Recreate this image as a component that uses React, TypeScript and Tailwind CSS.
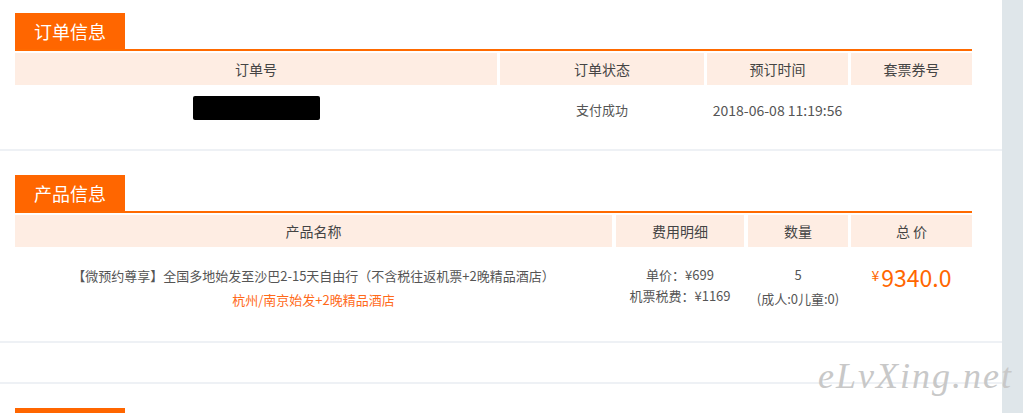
import React from "react";

const font = { fontFamily: '"Noto Sans CJK SC", "Noto Sans", sans-serif' };

function Tab({ label }: { label: string }) {
  return (
    <div className="flex">
      <div className="w-[110px] h-[36px] bg-[#ff6600] text-white text-[18px] flex items-center justify-center leading-none">
        {label}
      </div>
    </div>
  );
}

function Head({ w, ml, children }: { w: string; ml?: string; children: React.ReactNode }) {
  return (
    <div className={`${w} ${ml ?? ""} h-[32px] bg-[#feede3] flex items-center justify-center text-[14px] text-[#444]`}>
      {children}
    </div>
  );
}

export default function App() {
  return (
    <div className="relative flex w-[1023px] h-[413px] overflow-hidden bg-white" style={font}>
      <div className="w-[1002px] shrink-0">
        {/* Section 1 */}
        <div className="pt-[13px] pl-[15px] w-[972px]">
          <Tab label="订单信息" />
          <div className="h-[2px] bg-[#ff6a00]" />
          <div className="h-[2px]" />
          <div className="flex">
            <Head w="w-[482px]">订单号</Head>
            <Head w="w-[204px]" ml="ml-[3px]">订单状态</Head>
            <Head w="w-[141px]" ml="ml-[3px]">预订时间</Head>
            <Head w="w-[121px]" ml="ml-[3px]">套票券号</Head>
          </div>
          <div className="flex h-[64px] pt-[11px] text-[13px] text-[#555]">
            <div className="w-[482px] flex justify-center">
              <div className="w-[127px] h-[24px] bg-black rounded-[2px]" />
            </div>
            <div className="w-[204px] ml-[3px] text-center leading-[24px] pt-[2px]">支付成功</div>
            <div className="w-[141px] ml-[3px] text-center leading-[24px] pt-[2px] text-[14px] whitespace-nowrap">2018-06-08 11:19:56</div>
            <div className="w-[121px] ml-[3px]" />
          </div>
        </div>
        <div className="h-[2px] bg-[#eef1f5]" />

        {/* Section 2 */}
        <div className="pt-[24px] pl-[15px] w-[972px]">
          <Tab label="产品信息" />
          <div className="h-[2px] bg-[#ff6a00]" />
          <div className="h-[2px]" />
          <div className="flex">
            <Head w="w-[597px]">产品名称</Head>
            <Head w="w-[128px]" ml="ml-[4px]">费用明细</Head>
            <Head w="w-[100px]" ml="ml-[4px]">数量</Head>
            <Head w="w-[121px]" ml="ml-[3px]">总 价</Head>
          </div>
          <div className="flex h-[94px] pt-[17px] text-[13px] text-[#555]">
            <div className="w-[597px] text-center">
              <div className="leading-[24px]">【微预约尊享】全国多地始发至沙巴2-15天自由行（不含税往返机票+2晚精品酒店）</div>
              <div className="leading-[24px] text-[#ff6a1a]">杭州/南京始发+2晚精品酒店</div>
            </div>
            <div className="w-[128px] ml-[4px] text-center">
              <div className="leading-[22px]">单价：¥699</div>
              <div className="leading-[20px]">机票税费：¥1169</div>
            </div>
            <div className="w-[100px] ml-[4px] text-center">
              <div className="leading-[22px]">5</div>
              <div className="leading-[26px]">(成人:0儿童:0)</div>
            </div>
            <div className="w-[121px] ml-[3px] flex justify-center items-start text-[#ff6600] -mt-[2px]">
              <span className="text-[14px] leading-[24px] mt-[1px] mr-[2px]">¥</span>
              <span className="text-[23px] leading-[30px]">9340.0</span>
            </div>
          </div>
        </div>
        <div className="h-[2px] bg-[#eef1f5]" />
        <div className="h-[39px]" />
        <div className="h-[2px] bg-[#eef1f5]" />

        {/* Section 3 (partial) */}
        <div className="pt-[24px] pl-[15px]">
          <Tab label="" />
        </div>
      </div>
      <div className="w-[21px] bg-[#dfe6ea]" />

      <div
        className="absolute left-[818px] top-[358px] text-[36px] italic text-[#c8c8c8] tracking-[2px] leading-none"
        style={{ fontFamily: '"Liberation Serif", "DejaVu Serif", serif' }}
      >
        eLvXing.net
      </div>
    </div>
  );
}
